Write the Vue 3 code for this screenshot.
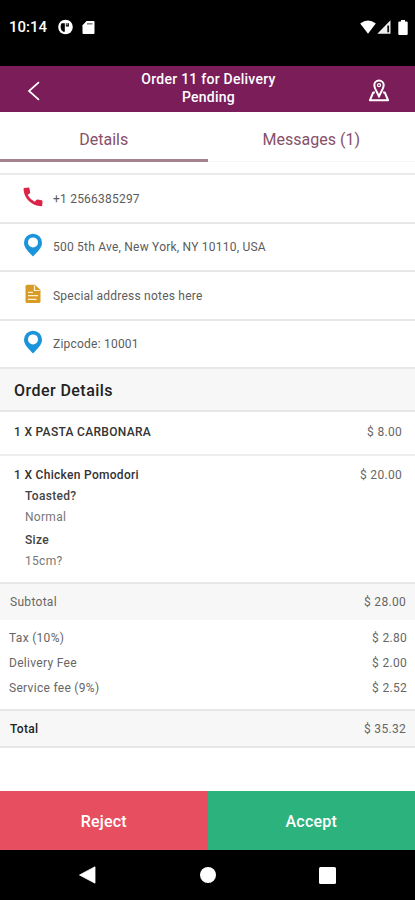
<script setup>
const contacts = [
  { icon: 'phone', text: '+1 2566385297' },
  { icon: 'pin', text: '500 5th Ave, New York, NY 10110, USA' },
  { icon: 'note', text: 'Special address notes here' },
  { icon: 'pin', text: 'Zipcode: 10001' },
]
const fees = [
  { label: 'Tax (10%)', value: '$ 2.80' },
  { label: 'Delivery Fee', value: '$ 2.00' },
  { label: 'Service fee (9%)', value: '$ 2.52' },
]
const options = [
  { name: 'Toasted?', value: 'Normal' },
  { name: 'Size', value: '15cm?' },
]
</script>

<template>
  <div class="screen">
    <div class="status">
      <span class="clock">10:14</span>
      <svg class="app-dot" width="15" height="16" viewBox="0 0 15 16">
        <circle cx="7.5" cy="8" r="7.3" fill="#fff" />
        <path d="M3.600 4.200H6.800V12.800H5.200Q2.600 11.200 2.600 8 2.600 5.500 3.600 4.200z" fill="#000" />
        <path d="M7.800 4.200H11V7.600H7.800z" fill="#222" />
        <path d="M8.600 4H9.600V6H8.600z" fill="#aaa" />
      </svg>
      <svg class="sd" width="13" height="15" viewBox="0 0 13 15">
        <path d="M4.600 1H11.500Q12.500 1 12.500 2V13Q12.500 14 11.500 14H1.500Q.5 14 .5 13V5.200z" fill="#fff" />
        <path d="M5 3.800H10.500" stroke="#777" stroke-width="1.400" />
      </svg>
      <span class="spacer"></span>
      <svg width="16" height="14" viewBox="0 0 16 14"><path d="M8 13.8L.2 3.400Q8-2.600 15.800 3.400z" fill="#fff" /></svg>
      <svg class="signal" width="14" height="14" viewBox="0 0 14 14">
        <path d="M13.500.3V13.700H.3z" fill="#eee" /><path d="M10.300 5.500h1.800v6.800h-1.800z" fill="#111" />
      </svg>
      <svg class="battery" width="10" height="15" viewBox="0 0 10 15"><path d="M3 0h4v1.600h1.700q1 0 1 1V14q0 1-1 1H1.300q-1 0-1-1V2.600q0-1 1-1H3z" fill="#fff" /></svg>
    </div>

    <header class="header">
      <svg class="back" width="14" height="20" viewBox="0 0 14 20"><path d="M12 1.200L2 10l10 8.800" fill="none" stroke="#fff" stroke-width="1.700" /></svg>
      <h1>Order 11 for Delivery<br />Pending</h1>
      <svg class="map" width="22" height="23" viewBox="0 0 22 23" fill="none" stroke="#fff" stroke-width="2" stroke-linejoin="round">
        <path d="M11 17.800C9.800 13.600 6.300 10.100 6.300 6.200a4.700 4.700 0 0 1 9.400 0c0 3.900-3.500 7.400-4.700 11.600z" />
        <circle cx="11" cy="6.200" r="1.500" stroke-width="1.300" />
        <path d="M6.900 13.500H5.200L1.900 21.300H20.100L16.800 13.500H15.100" />
      </svg>
    </header>

    <nav class="tabs">
      <div class="tab active">Details</div>
      <div class="tab">Messages (1)</div>
    </nav>

    <section class="contacts">
      <div v-for="c in contacts" :key="c.text" class="contact">
        <svg v-if="c.icon === 'phone'" class="icon" width="20" height="20" viewBox="0 0 20 20">
          <path d="M1.500.9L5.500.6Q6.300.6 6.500 1.400L7.200 5.400Q7.200 6.200 6.500 6.600L4.700 8Q7.300 12.700 11.800 14.700L13.300 13Q13.800 12.500 14.500 12.600L18.600 13.200Q19.500 13.500 19.500 14.300L19.300 18.200Q19.200 19.200 18.200 19.200C8.500 18.800 1 11.500.5 2Q.5 1 1.500.9z" fill="#db2448" />
        </svg>
        <svg v-else-if="c.icon === 'pin'" class="icon pin" width="20" height="24" viewBox="0 0 20 24">
          <path fill-rule="evenodd" d="M10 .7a9 9 0 0 1 9 9c0 5.500-5.200 9.500-9 13.800C6.200 19.200 1 15.200 1 9.700a9 9 0 0 1 9-9zm0 3.700a5 5 0 1 0 0 10 5 5 0 0 0 0-10z" fill="#1b94db" />
        </svg>
        <svg v-else class="icon note" width="20" height="20" viewBox="0 0 20 20">
          <path d="M4 .8H12L17.500 6V17.500Q17.500 19 16 19H4Q2.500 19 2.500 17.500V2.300Q2.500.8 4 .8z" fill="#d99b27" />
          <path d="M11.500 1.600V6.500H16.600" fill="none" stroke="#fff1ce" stroke-width="1.200" />
          <path d="M5 8.300H10M5 11.600H15M5 15.300H13.500" stroke="#fff1ce" stroke-width="1.300" />
        </svg>
        <span>{{ c.text }}</span>
      </div>
    </section>

    <h2 class="section-title">Order Details</h2>

    <div class="item first">
      <div class="line"><b>1 X PASTA CARBONARA</b><span>$ 8.00</span></div>
    </div>
    <div class="item second">
      <div class="line"><b>1 X Chicken Pomodori</b><span>$ 20.00</span></div>
      <dl>
        <template v-for="o in options" :key="o.name">
          <dt>{{ o.name }}</dt>
          <dd>{{ o.value }}</dd>
        </template>
      </dl>
    </div>

    <div class="line subtotal"><span>Subtotal</span><span>$ 28.00</span></div>
    <div class="fees">
      <div v-for="f in fees" :key="f.label" class="line"><span>{{ f.label }}</span><span>{{ f.value }}</span></div>
    </div>
    <div class="line total"><b>Total</b><span>$ 35.32</span></div>

    <div class="actions">
      <button class="reject">Reject</button>
      <button class="accept">Accept</button>
    </div>

    <div class="sysnav">
      <svg width="17" height="18" viewBox="0 0 17 18"><path d="M16 .8V17.200L.5 9z" fill="#fff" stroke="#fff" stroke-width=".8" stroke-linejoin="round" /></svg>
      <span class="home"></span>
      <span class="recent"></span>
    </div>
  </div>
</template>

<style>
body { margin: 0; background: #fff; }
</style>

<style scoped>
* { box-sizing: border-box; }
.screen { width: 415px; height: 900px; display: flex; flex-direction: column; overflow: hidden; background: #fff; color: #666; font-family: Roboto, sans-serif; font-size: 12px; letter-spacing: .3px; line-height: 16px; }
.screen > * { flex-shrink: 0; }
.status { height: 66px; padding: 0 7px 12px 9px; display: flex; align-items: center; background: #000; color: #fff; }
.clock { width: 49px; font-size: 15px; font-weight: 500; letter-spacing: 0; }
.sd { margin-left: 9px; }
.spacer { flex: 1; }
.signal { margin-left: 1px; }
.battery { margin-left: 7px; }
.header { height: 46px; padding: 0 25px 0 27px; display: flex; align-items: center; justify-content: space-between; background: #7b1d59; color: #fff; }
.back { margin-top: 4px; }
.header h1 { margin: 0 0 1px; padding-left: 8px; font-size: 14px; line-height: 17.500px; font-weight: 500; text-align: center; letter-spacing: .25px; }
.map { margin-top: 3px; }
.tabs { height: 50px; display: flex; color: #865068; font-size: 16px; letter-spacing: 0; }
.tab { width: 208px; padding-top: 6px; display: flex; align-items: center; justify-content: center; border-bottom: 1px solid #f7f7f7; }
.tab.active { padding-top: 8px; border-bottom: 3px solid #a58290; }
.contacts { margin-top: 11px; border-top: 2px solid #ebebeb; }
.contact { height: 48.500px; padding: 1px 23px 0; display: flex; align-items: center; gap: 10px; border-bottom: 2px solid #e7e7e7; color: #5c5c5c; letter-spacing: .22px; }
.icon { flex: none; margin-bottom: 3px; }
.pin { margin-bottom: 4px; }
.note { margin-bottom: 4px; }
.section-title { height: 43px; margin: 0; padding-left: 14px; border-bottom: 2px solid #e7e7e7; background: #f7f7f7; color: #222; font-size: 16px; line-height: 44px; font-weight: 500; letter-spacing: .45px; }
.line { display: flex; justify-content: space-between; }
b { color: #333; font-weight: 500; }
.item { padding: 0 13px 0 14px; }
.first { height: 44px; padding-top: 12px; border-bottom: 2px solid #eee; }
.second { height: 126px; padding-top: 11px; }
dl { margin: 0; padding-left: 11px; }
dt { margin-top: 5px; color: #444; font-weight: 500; }
dt:nth-of-type(2) { margin-top: 7px; }
dd { margin: 5px 0 0; color: #777; }
.subtotal { height: 38px; padding: 0 9px 0 10px; align-items: center; border-top: 2px solid #e7e7e7; background: #f7f7f7; }
.fees { height: 89px; padding: 6px 8px 0 9px; line-height: 25px; }
.total { height: 39px; padding: 0 9px 0 10px; align-items: center; border-top: 2px solid #e7e7e7; border-bottom: 2px solid #e7e7e7; background: #f7f7f7; }
.total b { color: #222; }
.actions { height: 59px; margin-top: auto; display: flex; }
.actions button { width: 208px; border: 0; padding: 2px 0 0; color: #fff; font: 500 16px Roboto, sans-serif; letter-spacing: .2px; }
.reject { background: #e74f60; }
.accept { background: #2bb27d; }
.sysnav { height: 50px; padding: 0 79px; display: flex; align-items: center; justify-content: space-between; background: #000; }
.home { width: 16px; height: 16px; border-radius: 50%; background: #fff; }
.recent { width: 17px; height: 17px; border-radius: 1.500px; background: #fff; }
</style>
